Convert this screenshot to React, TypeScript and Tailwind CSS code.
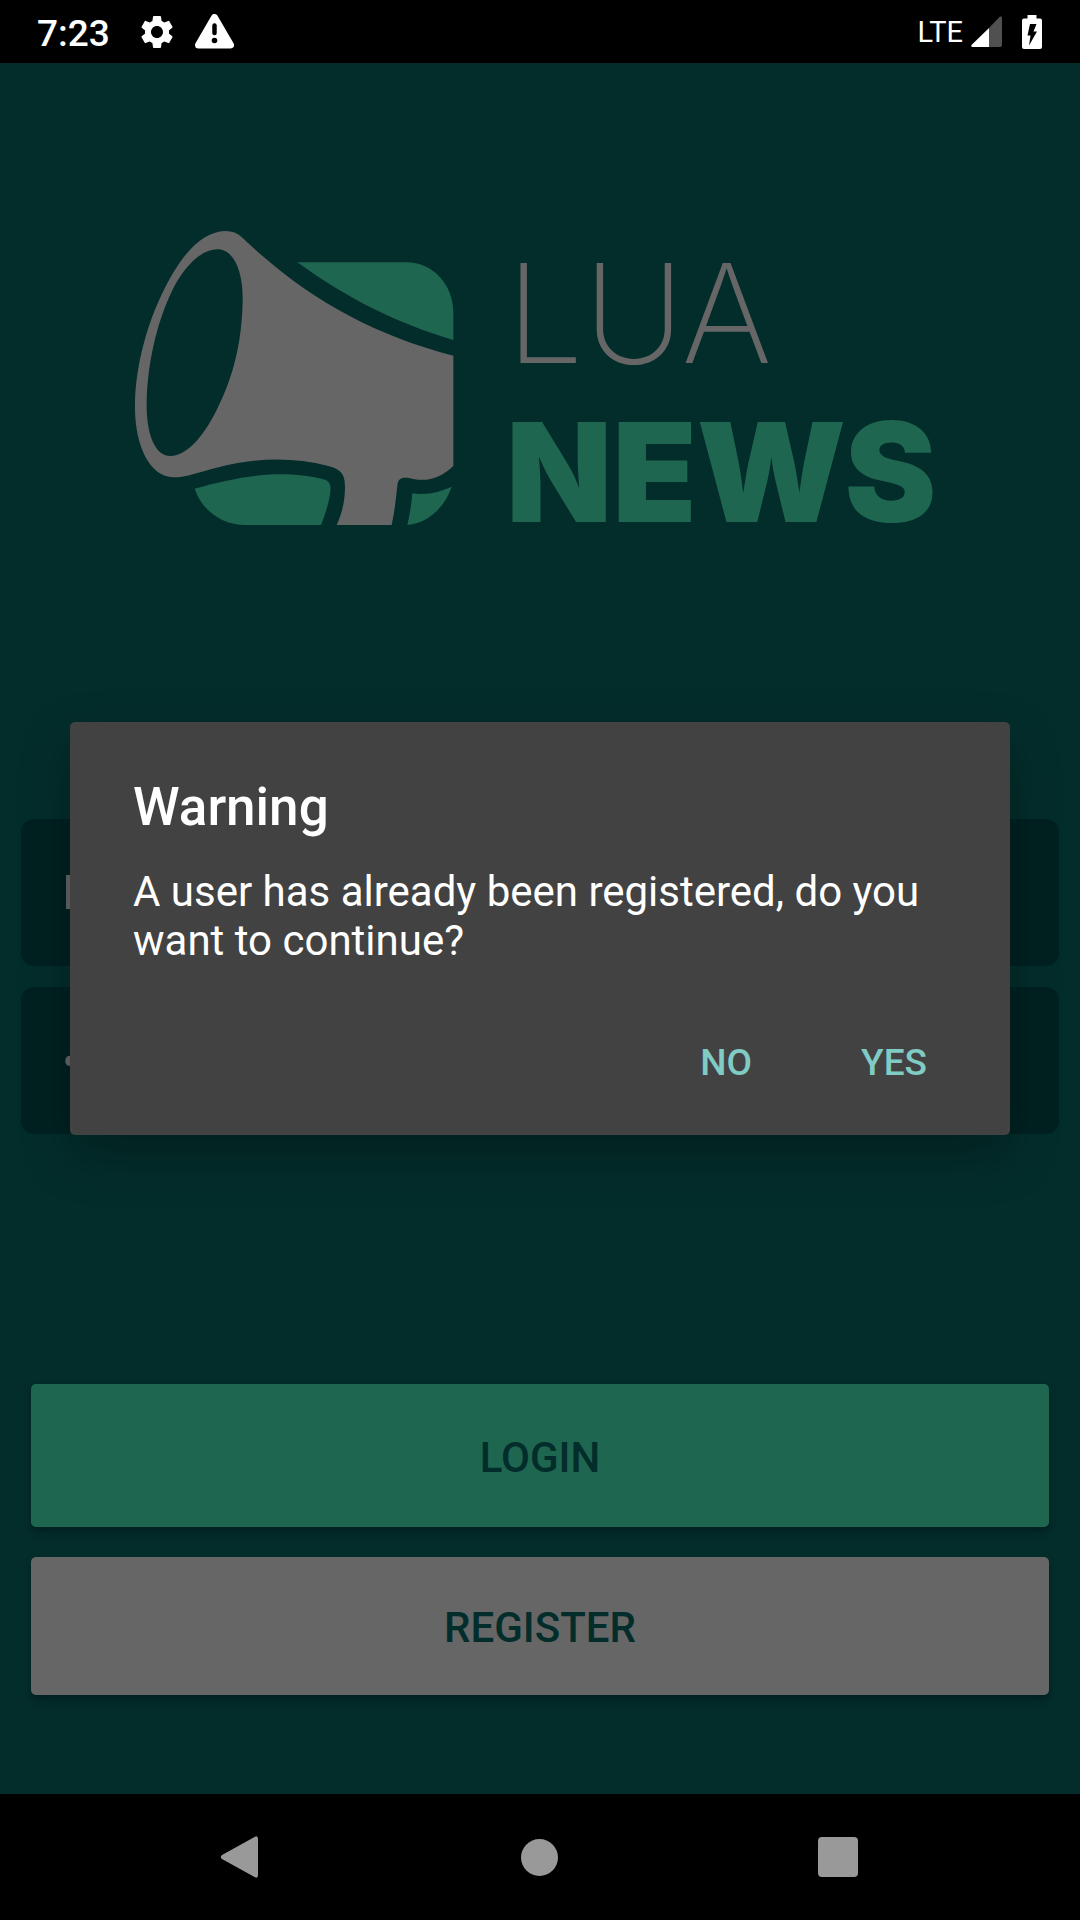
import { MdSettings } from 'react-icons/md';

function StatusBar() {
  return (
    <header className="flex h-[63px] shrink-0 items-center justify-between bg-black pl-[37px] pr-[38px] text-white">
      <div className="flex items-center">
        <span className="pt-1 text-[37px] font-medium leading-[60px]">7:23</span>
        <MdSettings className="ml-[27px] size-10" />
        <svg className="ml-[18px] h-[35px] w-[39px]" viewBox="0 0 39 35" fill="none" aria-label="Alert">
          <path d="M19.500 3.500 L35.500 31 H3.500 Z" fill="#fff" stroke="#fff" strokeWidth="7" strokeLinejoin="round" />
          <path d="M19.500 11.500 V19" stroke="#000" strokeWidth="4.500" strokeLinecap="round" />
          <circle cx="19.500" cy="26.500" r="2.800" fill="#000" />
        </svg>
      </div>
      <div className="flex items-center">
        <span className="text-[29px] leading-[60px]">LTE</span>
        <svg className="ml-2 h-[31px] w-[31px]" viewBox="0 0 31 31" aria-label="Signal">
          <path d="M29 .5 Q31 0 31 2 V29 Q31 31 29 31 H18 V12 Z" fill="#505050" />
          <path d="M18 12 V31 H2 Q-1 31 1 28.500 Z" fill="#fff" />
        </svg>
        <svg className="ml-5 h-[34px] w-[20px]" viewBox="0 0 20 34" aria-label="Battery charging">
          <path d="M5.500 0 H14.500 V3.500 H18 Q20 3.500 20 5.500 V32 Q20 34 18 34 H2 Q0 34 0 32 V5.500 Q0 3.500 2 3.500 H5.500 Z" fill="#fff" />
          <path d="M8 9 H14.500 L11.500 16.500 H15 L7 30.500 L8.500 20.500 H5.500 Z" fill="#000" />
        </svg>
      </div>
    </header>
  );
}

function Logo() {
  return (
    <div className="flex h-[294px] items-start justify-center">
      <svg className="h-[294px] w-[319px] shrink-0" viewBox="45 63 957 882" aria-label="Megaphone">
        <g fill="#1f6650">
          <path d="M532 157 H858 C940 157 1000 225 1000 310 V390 C830 340 680 265 532 157Z" />
          <path d="M224 836 C320 810 400 793 480 793 C530 793 570 798 610 808 C628 813 633 822 631 845 C628 875 615 915 603 945 H375 C305 945 245 900 224 836Z" />
          <path d="M877 850 C925 856 960 845 995 830 C975 890 925 940 862 945 C870 910 875 880 877 850Z" />
        </g>
        <path
          fill="#666"
          fillRule="evenodd"
          d="M315 63 C345 63 360 75 380 95 C560 265 760 375 1000 437 V768 C960 805 925 815 880 807 C850 800 838 803 833 820 C828 860 825 900 815 945 H650 C668 905 675 870 675 830 C675 795 665 778 625 768 C510 738 400 745 290 773 C240 785 200 802 160 802 C90 800 47 710 45 600 C43 480 80 330 150 205 C200 115 255 65 315 63Z M292 118 C250 118 205 155 165 225 C115 320 83 450 80 575 C78 660 100 738 152 738 C195 738 245 690 290 600 C340 500 365 400 368 275 C370 190 345 118 292 118Z"
        />
      </svg>
      <h1 className="ml-[52px] flex w-[439px] flex-col pt-0.5 font-['Inter'] text-[138px] leading-[159px]">
        <span className="font-extralight text-[#666]">LUA</span>
        <span className="font-black text-[#1f6650]">NEWS</span>
      </h1>
    </div>
  );
}

const fieldClass =
  'h-[147px] w-full rounded-[13px] bg-[#002121] px-[41px] text-[49px] text-[#666] outline-none';

function WarningDialog() {
  return (
    <div className="absolute inset-0 flex items-center justify-center px-[70px]">
      <section
        role="dialog"
        aria-labelledby="warning-title"
        className="w-full rounded-[5px] bg-[#424242] pb-[10px] pt-[49px] text-white shadow-[0_20px_50px_rgba(0,0,0,0.28)]"
      >
        <h2 id="warning-title" className="px-[63px] text-[53px] font-medium leading-[72px]">
          Warning
        </h2>
        <p className="mt-6 px-[63px] text-[42px] leading-[49px]">
          A user has already been registered, do you want to continue?
        </p>
        <div className="mt-[34px] flex justify-end pr-8 text-[37px] font-medium text-[#80cbc4]">
          <button type="button" className="h-[126px] w-[168px] pt-0.5">NO</button>
          <button type="button" className="h-[126px] w-[168px] pt-0.5">YES</button>
        </div>
      </section>
    </div>
  );
}

function NavigationBar() {
  return (
    <nav className="flex h-[126px] shrink-0 items-center justify-center bg-black pr-0.5">
      <button type="button" aria-label="Back" className="flex w-[299px] justify-center">
        <svg className="h-[42px] w-10" viewBox="0 0 40 42">
          <path d="M34.500 1 Q38 -1 38 3 V39 Q38 43 34.500 41 L2 23 Q-0.500 21 2 19 Z" fill="#999" />
        </svg>
      </button>
      <button type="button" aria-label="Home" className="flex w-[299px] justify-center">
        <span className="size-[37px] rounded-full bg-[#999]" />
      </button>
      <button type="button" aria-label="Recent apps" className="flex w-[299px] justify-center">
        <span className="size-10 rounded bg-[#999]" />
      </button>
    </nav>
  );
}

export default function App() {
  return (
    <div className="flex min-h-screen flex-col bg-[#032d2b] font-['Roboto',sans-serif]">
      <StatusBar />
      <main className="relative flex flex-1 flex-col pb-[99px] pt-[168px]">
        <Logo />
        <form className="flex flex-1 flex-col">
          <div className="mt-[294px] flex flex-col gap-[21px] px-[21px]">
            <input aria-label="Email" type="text" defaultValue="Email" className={fieldClass} />
            <input aria-label="Password" type="password" defaultValue="password" className={`${fieldClass} pt-1`} />
          </div>
          <div className="mt-auto flex flex-col gap-[30px] px-[31px] text-[42px] font-medium text-[#032d2b]">
            <button type="submit" className="h-[143px] rounded-[5px] bg-[#1f6650] pt-1 shadow-[0_5px_8px_rgba(0,0,0,0.3)]">
              LOGIN
            </button>
            <button type="button" className="h-[138px] rounded-[5px] bg-[#666] pt-0.5 shadow-[0_5px_8px_rgba(0,0,0,0.3)]">
              REGISTER
            </button>
          </div>
        </form>
        <WarningDialog />
      </main>
      <NavigationBar />
    </div>
  );
}
